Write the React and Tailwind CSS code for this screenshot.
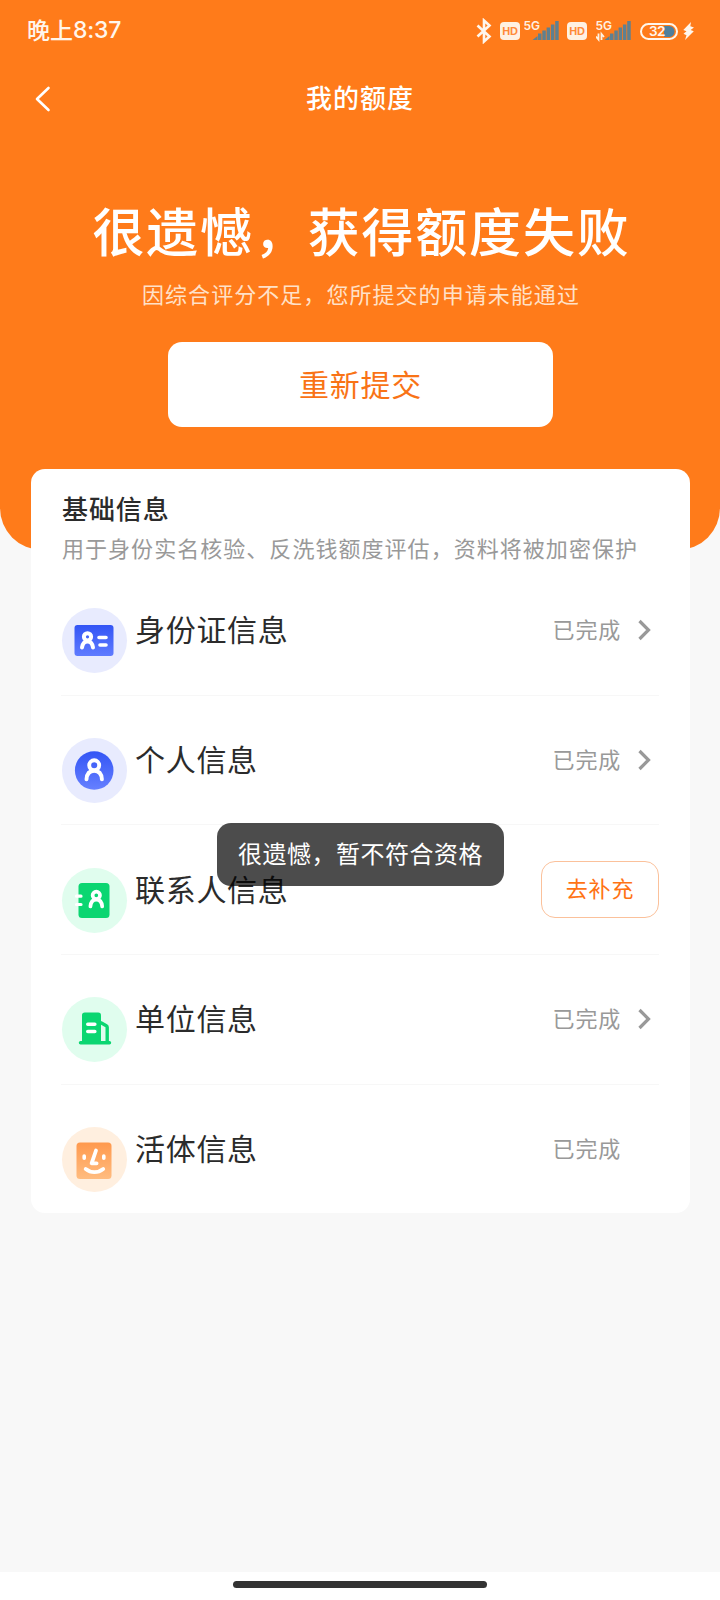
const steps = [
  { title: "身份证信息", Icon: IdCardIcon, tint: "bg-[#e8ebfe]", status: "done" },
  { title: "个人信息", Icon: PersonIcon, tint: "bg-[#e8ebfe]", status: "done" },
  { title: "联系人信息", Icon: ContactIcon, tint: "bg-[#e0fdee]", status: "todo" },
  { title: "单位信息", Icon: CompanyIcon, tint: "bg-[#e0fdee]", status: "done" },
  { title: "活体信息", Icon: FaceIcon, tint: "bg-[#ffefdf]", status: "locked" },
];

function IdCardIcon() {
  return (
    <svg viewBox="0 0 65 65" className="size-full" fill="none">
      <defs>
        <linearGradient id="idcard" x1="0" y1="0" x2="0" y2="1">
          <stop offset="0" stopColor="#3355f5" />
          <stop offset="1" stopColor="#5f7bff" />
        </linearGradient>
      </defs>
      <rect x="12.500" y="17" width="39" height="31" rx="3" fill="url(#idcard)" />
      <g stroke="#fff" strokeWidth="4" strokeLinecap="round">
        <circle cx="25.5" cy="28.8" r="3.6" />
        <path d="M20 39.6c.5-4 2.400-6.200 5.500-6.200s5 2.200 5.500 6.200" />
        <path d="M37 29.500h7M38 37h6" strokeWidth="3.600" />
      </g>
    </svg>
  );
}

function PersonIcon() {
  return (
    <svg viewBox="0 0 65 65" className="size-full" fill="none">
      <defs>
        <linearGradient id="person" x1="0" y1="0" x2="0" y2="1">
          <stop offset="0" stopColor="#3355f5" />
          <stop offset="1" stopColor="#6680ff" />
        </linearGradient>
      </defs>
      <circle cx="32.200" cy="32.500" r="19.300" fill="url(#person)" />
      <g stroke="#fff" strokeWidth="3.900" strokeLinecap="round">
        <circle cx="32.200" cy="27.300" r="5" />
        <path d="M24.500 41.300c.4-5.600 3.100-8.500 7.700-8.500s7.300 2.900 7.700 8.500" />
      </g>
    </svg>
  );
}

function ContactIcon() {
  return (
    <svg viewBox="0 0 65 65" className="size-full" fill="none">
      <rect x="16.500" y="15" width="31" height="35" rx="3.500" fill="#0bd671" />
      <g stroke="#fff" strokeLinecap="round">
        <path d="M14.500 28.200h4.500M14.500 36.500h4.500" strokeWidth="3.200" />
        <circle cx="34.300" cy="27.300" r="3.700" strokeWidth="3.700" />
        <path d="M28.400 38.500c.4-4.400 2.500-6.800 5.900-6.800s5.500 2.400 5.900 6.800" strokeWidth="3.700" />
      </g>
    </svg>
  );
}

function CompanyIcon() {
  return (
    <svg viewBox="0 0 65 65" className="size-full" fill="none">
      <path
        d="M20 45.500V18.300a2.800 2.800 0 0 1 2.800-2.800h13.400a2.800 2.800 0 0 1 2.800 2.800v27.200z"
        fill="#0bd671"
      />
      <path d="M38.500 25.500l5.800 3.200q.9.500.9 1.600v15" stroke="#0bd671" strokeWidth="3.400" />
      <path d="M18.500 45.800h29" stroke="#0bd671" strokeWidth="3.400" strokeLinecap="round" />
      <path d="M25.800 27.200h7M25.800 34.500h7" stroke="#fff" strokeWidth="3.600" strokeLinecap="round" />
    </svg>
  );
}

function FaceIcon() {
  return (
    <svg viewBox="0 0 65 65" className="size-full" fill="none">
      <defs>
        <linearGradient id="face" x1="0" y1="0" x2="0" y2="1">
          <stop offset="0" stopColor="#ff994d" />
          <stop offset="1" stopColor="#ffbc80" />
        </linearGradient>
      </defs>
      <rect x="14.500" y="15.500" width="35" height="36.500" rx="3.500" fill="url(#face)" />
      <g stroke="#fff" strokeLinecap="round" strokeLinejoin="round">
        <path d="M22.200 29v2.200M41.800 29v2.200" strokeWidth="3.600" />
        <path d="M34 23.500l-4.400 12.800h5" strokeWidth="3.800" />
        <path d="M23.700 42c5.200 4.200 12.300 4.200 17.500 0" strokeWidth="3.800" />
      </g>
    </svg>
  );
}

function HdBadge() {
  return (
    <span className="flex h-[18px] w-5 items-center justify-center rounded-[4px] bg-[#fff1e2] font-['Liberation_Sans'] text-[11px] font-bold leading-none tracking-[-0.300px] text-[#ff8a38]">
      HD
    </span>
  );
}

function Signal({ data }) {
  return (
    <svg viewBox="0 0 38 24" className="h-6 w-[38px]">
      <g fill="#5f8090">
        <path d="M8.500 21l5-4v4z" />
        <rect x="14" y="14.500" width="3.500" height="6.500" />
        <rect x="18.300" y="11.500" width="3.500" height="9.500" />
        <rect x="22.600" y="8.500" width="3.500" height="12.500" />
        <rect x="26.900" y="5.500" width="3.500" height="15.500" />
        <rect x="31.200" y="2" width="3.500" height="19" />
      </g>
      <text x="-0.500" y="10.500" fontSize="12" fontWeight="600" fontFamily="Inter, sans-serif" fill="#fff1e2">
        5G
      </text>
      {data && (
        <path
          d="M0 17.500L2.500 20.500V14.500M5.500 21V15L8 18"
          stroke="#fff1e2"
          strokeWidth="1.800"
          fill="none"
        />
      )}
    </svg>
  );
}

function StatusBar() {
  return (
    <div className="flex h-[62px] items-center justify-between pl-[27px] pr-[26px] text-[#fff6ec]">
      <div className="flex items-center pb-[3px] text-[23px] font-medium leading-none">
        晚上<span className="pt-[2px] font-[Inter] tracking-[-0.200px]">8:37</span>
      </div>
      <div className="flex items-center">
        <svg viewBox="0 0 16 26" className="mr-2 h-[26px] w-4" fill="none" stroke="currentColor" strokeWidth="2.600">
          <path d="M1.500 7.500l12 11L8 23.500V2.500l5.500 5-12 11" />
        </svg>
        <HdBadge />
        <span className="ml-1">
          <Signal />
        </span>
        <span className="ml-[5px]">
          <HdBadge />
        </span>
        <span className="ml-[9px]">
          <Signal data />
        </span>
        <svg viewBox="0 0 38 17" className="ml-1.5 h-[17px] w-[38px]">
          <path d="M24 3h5a5.500 5.500 0 0 1 0 11h-5z" fill="#4f7f9c" />
          <rect x="1" y="1" width="36" height="15" rx="7.500" fill="none" stroke="currentColor" strokeWidth="2" />
          <text x="9" y="13.300" fontSize="13.500" fontWeight="600" fontFamily="Inter, sans-serif" letterSpacing="-0.500" fill="currentColor">
            32
          </text>
        </svg>
        <svg viewBox="0 0 11 18" className="ml-[5px] h-[18px] w-[11px]" fill="currentColor">
          <path d="M8 0L.3 8l3.200 1.300L.5 11.800l3 1.400L2 18 10.800 9.300 7.600 8 11 5.600 7.300 4.300z" />
        </svg>
      </div>
    </div>
  );
}

function NavBar() {
  return (
    <div className="flex h-[73px] items-center justify-between px-[31px] text-white">
      <svg viewBox="0 0 22 28" className="h-7 w-[22px]" fill="none" stroke="currentColor" strokeWidth="2.600">
        <path d="M17.500 3L6 14l11.500 11" strokeLinecap="round" strokeLinejoin="round" />
      </svg>
      <h1 className="pb-[3px] text-[26px] font-medium leading-none tracking-[1px]">我的额度</h1>
      <span className="w-[22px]" />
    </div>
  );
}

function Row({ step, last }) {
  const { title, Icon, tint, status } = step;

  return (
    <li
      className={
        last
          ? "flex h-[128.700px] items-center"
          : "flex h-[129.700px] items-center border-b border-[#f7f7f7]"
      }
    >
      <span className={`ml-px mt-[21px] size-[65px] rounded-full ${tint}`}>
        <Icon />
      </span>
      <span className="ml-2 flex-1 pb-1 text-[30px] leading-none tracking-[0.700px] text-[#2b2b2b]">
        {title}
      </span>
      {status === "todo" ? (
        <button className="h-[57px] w-[118px] rounded-[14px] border border-[#fbc19b] pb-[5px] text-[22px] leading-none tracking-[0.800px] text-[#ff7314]">
          去补充
        </button>
      ) : (
        <span className="flex items-center text-[22px] leading-none tracking-[0.800px] text-[#999]">
          <span className="pb-[5px]">已完成</span>
          <svg viewBox="0 0 14 22" className="ml-4 mr-2 h-[22px] w-3.5" fill="none">
            {status === "done" && <path d="M2.500 2l9 9-9 9" stroke="#999" strokeWidth="3.200" />}
          </svg>
        </span>
      )}
    </li>
  );
}

export default function App() {
  return (
    <div className="relative flex h-[1600px] w-[720px] flex-col overflow-hidden bg-[#f8f8f8] font-['Noto_Sans_CJK_SC',sans-serif]">
      <header className="h-[550px] shrink-0 rounded-b-[42px] bg-[#ff7b1a]">
        <StatusBar />
        <NavBar />
        <div className="flex flex-col items-center pt-[69px]">
          <h2 className="pl-[3px] text-[52px] font-medium leading-[52px] tracking-[1.800px] text-white">
            很遗憾，获得额度失败
          </h2>
          <p className="mt-[26px] pl-[2px] text-[22px] leading-[22px] tracking-[1.050px] text-[#ffe1c8]">
            因综合评分不足，您所提交的申请未能通过
          </p>
          <button className="mt-[38px] h-[85px] w-[385px] rounded-[14px] bg-white pb-[3px] pl-px text-[30px] leading-none tracking-[0.700px] text-[#f97316]">
            重新提交
          </button>
        </div>
      </header>

      <main className="relative -mt-[81px] ml-[31px] mr-[30px] h-[744px] rounded-[14px] bg-white pl-[30px] pr-[31px] pt-[26px]">
        <h3 className="pl-px text-[26px] font-medium leading-[26px] tracking-[0.900px] text-[#2b2b2b]">
          基础信息
        </h3>
        <p className="mt-[15px] whitespace-nowrap pl-px text-[22px] leading-[22px] tracking-[1.040px] text-[#999]">
          用于身份实名核验、反洗钱额度评估，资料将被加密保护
        </p>
        <ul className="mt-2">
          {steps.map((step, index) => (
            <Row key={step.title} step={step} last={index === steps.length - 1} />
          ))}
        </ul>
      </main>

      {/* Toast */}
      <div className="absolute left-[217px] top-[823px] flex h-[63px] w-[287px] items-center justify-center rounded-[14px] bg-black/70 pb-[3px] text-[24px] leading-none tracking-[0.500px] text-white">
        很遗憾，暂不符合资格
      </div>

      {/* Home indicator */}
      <footer className="mt-auto flex h-7 items-start justify-center bg-white pt-[9px]">
        <span className="h-[7px] w-[254px] rounded-full bg-[#333]" />
      </footer>
    </div>
  );
}
